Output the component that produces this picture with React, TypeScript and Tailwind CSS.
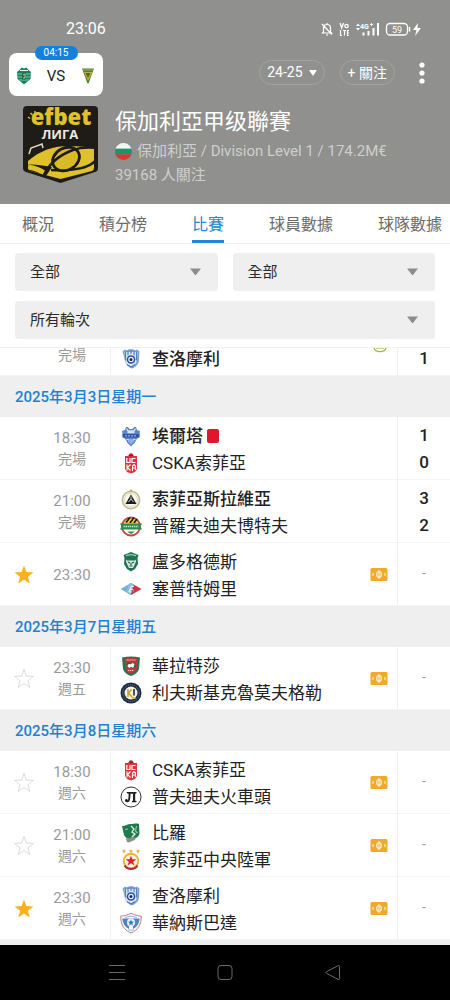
import { useState, type ReactNode } from "react";

type Team = { name: string; crest: ReactNode; score?: number; winner?: boolean; redCard?: boolean };
type Match = { id: string; time: string; note?: string; home: Team; away: Team; starred?: boolean };
type MatchDay = { date: string; matches: Match[] };

function Crest({ children }: { children: ReactNode }) {
  return (
    <svg viewBox="0 0 22 22" className="size-[22px] shrink-0" aria-hidden="true">
      {children}
    </svg>
  );
}

const chernoMore = (
  <Crest>
    <path d="M2.500 3.500 5 1.500l2 1 2-1.200h4l2 1.200 2-1 2.500 2-.6 9.500c-.4 3.500-3.500 6-6.900 7.500-3.400-1.500-6.500-4-6.900-7.500z" fill="#7fa3d6" />
    <path d="M4.500 4h13l-.8 9c-.5 2.800-3 4.800-5.700 6-2.700-1.200-5.200-3.200-5.700-6z" fill="#dfe9f7" />
    <path d="M5.500 3.500v9M8 2.500v5M11 2v4M14 2.500v5M16.500 3.500v9" stroke="#5580c2" strokeWidth="1.200" />
    <circle cx="11" cy="11.500" r="4.300" fill="#244f9c" />
    <circle cx="11" cy="11.500" r="2.700" fill="#fff" />
    <path d="m11 9.800 1.700 1.200-.6 2h-2.200l-.6-2z" fill="#16305f" />
    <path d="M7 16.500 11 19l4-2.500" stroke="#4a78bd" strokeWidth="1.200" fill="none" />
  </Crest>
);

const arda = (
  <Crest>
    <path d="M6 2h2l1.500 2h3L14 2h2l1 3 3 1-1 6-3 3-1 2.500-4 4-4-4L6 15l-3-3-1-6 3-1z" fill="#5b86cf" />
    <path d="M6.500 3.500 8 6h6l1.500-2.500M7.500 7.500h7" stroke="#d5e2f5" strokeWidth="1.300" fill="none" />
    <path d="M2.500 9h17v3.500h-17z" fill="#2c56a5" />
    <path d="M5 10.800h12" stroke="#a9c0e6" strokeWidth="1" strokeDasharray="2 1" />
    <path d="M6.500 14.500h2.500v3M15.500 14.500H13v3M11 14v5" stroke="#d5e2f5" strokeWidth=".9" fill="none" />
  </Crest>
);

const cska1948 = (
  <Crest>
    <path d="M5 4h4V2l2-1 2 1v2h4v13l-2 3-4 1.500L7 20l-2-3z" fill="#e2323b" />
    <path d="M8.500 3.500h5" stroke="#8d1b25" strokeWidth="1.200" />
    <path d="M6.800 6v4.500H10V6M15.500 6.500H12v4h3.500" stroke="#fff" strokeWidth="1.200" fill="none" />
    <path d="M7 12.500v6M10.500 12.500l-3 3 3 3M12.500 19v-5l1.500-1.500 1.500 1.500v4M12.500 16h3" stroke="#fff" strokeWidth="1.100" fill="none" />
  </Crest>
);

const slavia = (
  <Crest>
    <circle cx="11" cy="12" r="8.600" fill="#fbfaf5" stroke="#c7b98d" strokeWidth="1.600" />
    <circle cx="11" cy="12" r="6.500" fill="none" stroke="#e0d8bd" strokeWidth="1" />
    <path d="M9 3.500 11 1l2 2.500z" fill="#b7a979" />
    <path d="m11 6.500 5.500 9.500h-11z" fill="#1a1a1a" />
    <path d="m8.500 14 2.500-3 2.500 3M11 8.500V11" stroke="#fff" strokeWidth=".8" fill="none" />
  </Crest>
);

const botev = (
  <Crest>
    <circle cx="11" cy="11.500" r="9" fill="#fff" stroke="#c8453c" strokeWidth="2" />
    <path d="M4 8.500a8 8 0 0 1 14 0z" fill="#f3c81f" />
    <path d="m6 7.500 4-5M10 8l4-5.500M14 8l3-4" stroke="#1d1d1d" strokeWidth="1.700" />
    <path d="M0 8.500h22l-1.500 3L22 14.500H0l1.500-3z" fill="#2e8b4c" />
    <path d="M3.500 11.500h15" stroke="#cfe8d4" strokeWidth="1.600" strokeDasharray="1.400 .7" />
    <path d="M7 16.500h8l-4 2.500z" fill="#2e8b4c" />
  </Crest>
);

const ludogorets = (
  <Crest>
    <path d="m3.500 4 4-1.500L11 1l3.500 1.500 4 1.500-1 3 .5 6-3 5L11 20.500 7 18l-3-5 .5-6z" fill="#1f7550" />
    <path d="M6 4.800c3-1.200 7-1.200 10 0" stroke="#b7dccb" strokeWidth="1.100" fill="none" />
    <path d="M6 8.500c1 1.500 2 1 3.500 1h3c1.500 0 2.500.5 3.500-1 .5 2.500-1 3.500-1.500 5.500L13 17h-4l-1.500-3C7 12 5.500 11 6 8.500z" fill="#d7eae1" />
    <path d="m8 11 2 1M14 11l-2 1M9.500 15h3M11 12v2" stroke="#155a3b" strokeWidth="1.200" />
  </Crest>
);

const septemvri = (
  <Crest>
    <path d="M.5 11 11 5v12z" fill="#6fb3d8" />
    <path d="m11 5 10.500 6L11 17z" fill="#d23145" />
    <path d="m8.500 6.500 2.500-1.500 3 1.700-4 9.700-3.500-2z" fill="#8cc1de" />
    <path d="m9 14 2.300-5.500h3M10.300 11.300h3.200l-1 2.700H9.500" stroke="#fff" strokeWidth="1" fill="none" />
    <path d="m14.500 8-2.500 7" stroke="#a81f33" strokeWidth=".8" />
  </Crest>
);

const vratsa = (
  <Crest>
    <path d="M2 2.500c6-1.300 12-1.300 18 0l-1 11c-.5 3.500-4 6-8 7.500-4-1.500-7.500-4-8-7.500z" fill="#27764b" />
    <path d="M4.500 3.500c4-.8 9-.8 13 0l-.8 9.500c-.5 2.500-3 4.500-5.700 6-2.700-1.500-5.200-3.500-5.700-6z" fill="#d42f3b" />
    <path d="M6.500 7.500h9v5.500h-9z" fill="#236b43" />
    <path d="M7.500 11.500c0-2 1.500-3 3-2l2-1.500 2 1-1 3.500H12l-1-1-1.500 1.500z" fill="#fff" />
    <path d="M6.500 5h9M8 15.500h6" stroke="#f6c9cc" strokeWidth="1.200" strokeDasharray="1.300 .6" />
  </Crest>
);

const krumovgrad = (
  <Crest>
    <circle cx="11" cy="11" r="10.500" fill="#1b2c4a" />
    <circle cx="11" cy="11" r="8.300" fill="none" stroke="#8f9668" strokeWidth=".8" strokeDasharray="1.200 .9" />
    <circle cx="11" cy="11" r="6.500" fill="#f4f1dc" />
    <path d="M8 7v8M8.500 11l3-3.500M8.500 11l3.500 4" stroke="#c9a227" strokeWidth="1.500" />
    <path d="M14 7v6.500" stroke="#1b2c4a" strokeWidth="1.600" />
    <path d="m12 15.500 3.500 1" stroke="#d5b234" strokeWidth="1.400" />
  </Crest>
);

const lokoPlovdiv = (
  <Crest>
    <circle cx="11" cy="11" r="10" fill="#fff" stroke="#333" strokeWidth="1" />
    <path d="M6.500 6h10v1.300l-1.300.4v7l1.300.4v1.200h-4.500v-1.200l1-.4v-7h-2.500c-.1 5-.4 8.600-3.500 8.600-1.300 0-2-.8-2-1.700s.6-1.500 1.400-1.500c.7 0 1.200.5 1.300 1.200.7-.8.900-3.300.9-6.600l-1.600-.4z" fill="#222" />
  </Crest>
);

const beroe = (
  <Crest>
    <path d="M2 4c3 .5 5-2 9-2 3 0 5-1 8 0l.5 10c-1 3-4 4.500-7 6-4-.5-7-2-8.500-5z" fill="#1f7a4d" />
    <path d="M11 4l3 3-2 3 3 2-3 3" stroke="#e5f3ea" strokeWidth="1.300" fill="none" />
    <path d="m16.500 4-1 5 2 2M5 7.500l3-.5" stroke="#9cc9ae" strokeWidth="1.100" fill="none" />
    <path d="M6 17c2-2 3 0 5-1.500s3 .5 5-.5l-1 3-3 1-3 1.500-2-.5z" fill="#8e8d86" />
  </Crest>
);

const cska = (
  <Crest>
    <path d="m4 0 .6 1.300L6 1.500 5 2.500l.2 1.400L4 3.200l-1.200.7L3 2.500 2 1.500l1.400-.2zM11 0l.6 1.300 1.400.2-1 1 .2 1.400-1.200-.7-1.200.7.2-1.400-1-1 1.400-.2zM18 0l.6 1.300 1.400.2-1 1 .2 1.400-1.200-.7-1.200.7.200-1.400-1-1 1.400-.2z" fill="#f0a93a" />
    <circle cx="11" cy="12" r="7.300" fill="#fff6dc" stroke="#edb13f" strokeWidth="1.900" />
    <path d="m11 6.500 1.400 3.700h4l-3.200 2.500 1.200 3.900-3.400-2.300-3.400 2.300 1.200-3.900-3.200-2.500h4z" fill="#cf2432" />
    <path d="M4.500 16.500C6 19 8 20 11 20s5-1 6.500-3.500" stroke="#b92934" strokeWidth="2" fill="none" />
  </Crest>
);

const spartakVarna = (
  <Crest>
    <path d="M.8 4C4 4.200 7.500 3 11 1.300 14.500 3 18 4.200 21.200 4c.3 8-3 14-10.200 17C3.800 18 .5 12 .8 4z" fill="#fff" stroke="#c57589" strokeWidth="1" />
    <path d="M2.300 6.500h17.400c-.4 5-2.700 8.500-6.700 10.500v-3h-4v3C5 15 2.700 11.500 2.300 6.500z" fill="#4b87c4" />
    <circle cx="11" cy="10.500" r="4" fill="#eaf3fb" />
    <path d="m11 7.500.9 2 2.100.2-1.600 1.500.5 2.200-1.900-1.200-1.900 1.200.5-2.200L8 9.700l2.100-.2z" fill="#3e78b5" />
    <path d="M5 5.500 11 4l6 1.500M8 18h6" stroke="#8eb6de" strokeWidth="1.100" fill="none" />
  </Crest>
);

const previousMatch: Match = {
  id: "prev",
  time: "23:30",
  note: "完場",
  home: { name: "", crest: null },
  away: { name: "查洛摩利", crest: chernoMore, score: 1, winner: true },
};

const days: MatchDay[] = [
  {
    date: "2025年3月3日星期一",
    matches: [
      {
        id: "m1",
        time: "18:30",
        note: "完場",
        home: { name: "埃爾塔", crest: arda, score: 1, winner: true, redCard: true },
        away: { name: "CSKA索菲亞", crest: cska1948, score: 0 },
      },
      {
        id: "m2",
        time: "21:00",
        note: "完場",
        home: { name: "索菲亞斯拉維亞", crest: slavia, score: 3, winner: true },
        away: { name: "普羅夫迪夫博特夫", crest: botev, score: 2 },
      },
      {
        id: "m3",
        time: "23:30",
        starred: true,
        home: { name: "盧多格德斯", crest: ludogorets },
        away: { name: "塞普特姆里", crest: septemvri },
      },
    ],
  },
  {
    date: "2025年3月7日星期五",
    matches: [
      {
        id: "m4",
        time: "23:30",
        note: "週五",
        home: { name: "華拉特莎", crest: vratsa },
        away: { name: "利夫斯基克魯莫夫格勒", crest: krumovgrad },
      },
    ],
  },
  {
    date: "2025年3月8日星期六",
    matches: [
      {
        id: "m5",
        time: "18:30",
        note: "週六",
        home: { name: "CSKA索菲亞", crest: cska1948 },
        away: { name: "普夫迪夫火車頭", crest: lokoPlovdiv },
      },
      {
        id: "m6",
        time: "21:00",
        note: "週六",
        home: { name: "比羅", crest: beroe },
        away: { name: "索菲亞中央陸軍", crest: cska },
      },
      {
        id: "m7",
        time: "23:30",
        note: "週六",
        starred: true,
        home: { name: "查洛摩利", crest: chernoMore },
        away: { name: "華納斯巴達", crest: spartakVarna },
      },
    ],
  },
];

function StatusBar() {
  return (
    <div className="flex h-[53px] items-center justify-between pt-[5px] pr-[28px] pl-[66px]">
      <span className="text-[16px] leading-5">23:06</span>
      <svg viewBox="0 0 102 16" className="h-4 w-[102px]" fill="none" stroke="#fff" aria-hidden="true">
        <path d="M3.500 11V7a3.500 3.500 0 0 1 7 0v4l1 1h-9zM6 14h2M7 3.500V2M2 3l10 10.500" strokeWidth="1.200" />
        <path d="m20 2 1.700 5L23.500 2" strokeWidth="1.300" />
        <circle cx="26.500" cy="5" r="1.700" strokeWidth="1.300" />
        <path d="M20.500 9v5.500H22M23 9.500h3M24.500 9.500v5M29 9.500h-1.500v5H29M27.500 12H29" strokeWidth="1.200" />
        <path d="m36 5 2-2.500L40 5zM36 7h4l-2 2.500z" fill="#fff" stroke="none" />
        <text x="40" y="8" fontSize="7" fontWeight="700" fill="#fff" stroke="none">4G</text>
        <path d="M50 3.500h3M51.500 2v3" strokeWidth=".9" />
        <path d="M43.500 14.500v-3M48.500 14.500V10M53.500 14.500V7M58 14.500V2" strokeWidth="2" />
        <rect x="66.500" y="2.500" width="21" height="11.500" rx="3.500" strokeWidth="1.300" />
        <path d="M89.500 6v4.500" strokeWidth="1.500" />
        <text x="72" y="11.500" fontSize="9" fill="#fff" stroke="none">59</text>
        <path d="m98 2-5 7h3.500L95 15l6-8h-3.500z" fill="#fff" stroke="none" />
      </svg>
    </div>
  );
}

function LiveCard() {
  return (
    <a
      href="#live"
      className="relative ml-[9px] flex h-[43px] w-[94px] items-center justify-between rounded-lg bg-white px-2 pt-0.5 text-[#222]"
    >
      <span className="absolute inset-x-0 -top-[7px] mx-auto w-[43px] rounded-full bg-[#1580dc] text-center text-[10px] leading-[14px] text-white">
        04:15
      </span>
      <svg viewBox="0 0 14 18" className="h-[18px] w-3.5" aria-hidden="true">
        <path d="M3 2.500 4.500.5 7 1.500 9.500.5 11 2.500 14 5l-.5 7L10 15l-3 2.500L4 15 .5 12 0 5z" fill="#168463" />
        <path d="M0 7h14M.5 10h13M2 13h10" stroke="#8ecbb5" strokeWidth=".9" />
        <path d="M3 3.500h8" stroke="#fff" strokeWidth="1" />
        <path d="M5 6.500 7 5l2 1.500V12l-2 1-2-1z" fill="#176d50" />
        <path d="m6 8 2-1v4H6" stroke="#d8d278" strokeWidth=".9" fill="none" />
      </svg>
      <span className="text-[15px] leading-5">VS</span>
      <svg viewBox="0 0 14 18" className="h-[18px] w-3.5" aria-hidden="true">
        <path d="M1 1.500h12L7.500 16.500h-1z" fill="#547a32" />
        <path d="M3 5h8.500L7 14z" fill="#b2b83a" />
        <path d="M4.500 6h5L7 11z" fill="#6d5c2d" />
        <path d="M2 3h10" stroke="#93ad67" strokeWidth="1.200" />
      </svg>
    </a>
  );
}

function LeagueLogo() {
  return (
    <svg viewBox="0 0 75 78" className="h-[78px] w-[75px] shrink-0" role="img" aria-label="efbet Лига">
      <defs>
        <clipPath id="logo-field">
          <path d="M5 36h66v27q0 2-2 3L37.500 74 7 66q-2-1-2-3z" />
        </clipPath>
      </defs>
      <path d="M4 1h67q4 0 4 4v58q0 3-3 4L37.500 78 3 67q-3-1-3-4V5q0-4 4-4z" fill="#1f1c18" />
      <g clipPath="url(#logo-field)">
        <path d="M3 58C15 46 30 41 46 41c12 .5 20 1 29 3v34H3z" fill="#dfc22b" />
        <path d="M3 60c6-1 14 0 26 2l-8 12H3z" fill="#1f1c18" />
        <path d="M5 62c6 1 12 3 16 6" stroke="#dfc22b" strokeWidth="5" fill="none" />
        <path d="M72 56c-6 7-20 10-44 9" stroke="#1f1c18" strokeWidth="2.500" fill="none" />
        <ellipse cx="43" cy="54" rx="14" ry="11" transform="rotate(-28 43 54)" fill="#d8bb27" stroke="#1f1c18" strokeWidth="2.800" />
        <path d="M20 73c4-13 16-23 30-28 8-3 15-3 24-2" stroke="#1f1c18" strokeWidth="2.600" fill="none" />
      </g>
      <path d="m6 49 2-6 11-4 1 4" stroke="#ddd6c4" strokeWidth="1.500" fill="none" />
      <path d="m5 12 2 1.500M7.500 8l2 2M12 6v2.500" stroke="#dfc22b" strokeWidth="1.500" />
      <text x="38" y="20" textAnchor="middle" fontSize="22" fontWeight="800" fill="#dfc22b" fontFamily="Open Sans">
        efbet
      </text>
      <text x="37" y="34" textAnchor="middle" fontSize="13" fontWeight="700" fill="#eee9dc" fontFamily="Open Sans">
        ЛИГА
      </text>
    </svg>
  );
}

function Header() {
  return (
    <header className="bg-[#90908e] pb-[17px] text-white">
      <StatusBar />
      <div className="flex items-start">
        <LiveCard />
        <div className="ml-auto flex items-center pt-[7px] pr-[18px]">
          <button type="button" className="flex h-[25px] items-center gap-1.5 rounded-full border border-[#a2a2a0] px-[7px] text-[14px]">
            24-25
            <svg viewBox="0 0 8 6" className="h-1.5 w-2" aria-hidden="true">
              <path d="M0 0h8L4 6z" fill="#fff" />
            </svg>
          </button>
          <button type="button" className="ml-[15px] h-[25px] rounded-full border border-[#a2a2a0] px-[7px] text-[14px] leading-5 whitespace-nowrap">
            + 關注
          </button>
          <button type="button" aria-label="更多" className="ml-[17px] flex w-5 justify-center">
            <svg viewBox="0 0 6 22" className="h-[22px] w-1.5" fill="#fff" aria-hidden="true">
              <circle cx="3" cy="3" r="2.600" />
              <circle cx="3" cy="11" r="2.600" />
              <circle cx="3" cy="19" r="2.600" />
            </svg>
          </button>
        </div>
      </div>
      <div className="flex gap-[17px] pt-[9px] pr-4 pl-[23px]">
        <LeagueLogo />
        <div className="min-w-0">
          <h1 className="text-[22px] leading-[34px]">保加利亞甲级聯賽</h1>
          <p className="flex items-center gap-[5px] text-[15px] leading-6 whitespace-nowrap text-[#cfcfcd]">
            <svg viewBox="0 0 18 18" className="size-[17px]" aria-hidden="true">
              <clipPath id="flag">
                <circle cx="9" cy="9" r="9" />
              </clipPath>
              <g clipPath="url(#flag)">
                <path d="M0 0h18v6H0z" fill="#f5f5f5" />
                <path d="M0 6h18v6H0z" fill="#17966c" />
                <path d="M0 12h18v6H0z" fill="#d43a30" />
              </g>
            </svg>
            保加利亞 / Division Level 1 / 174.2M€
          </p>
          <p className="text-[15px] leading-6 text-[#cfcfcd]">39168 人關注</p>
        </div>
      </div>
    </header>
  );
}

const tabs = ["概況", "積分榜", "比賽", "球員數據", "球隊數據"];

function Tabs() {
  const [active, setActive] = useState("比賽");

  return (
    <nav className="flex gap-[45px] overflow-hidden border-b border-[#f0f0f0] pl-[22px]">
      {tabs.map((tab) => (
        <button
          key={tab}
          type="button"
          onClick={() => setActive(tab)}
          className={`h-[39px] shrink-0 border-b-[3px] pt-1.5 text-[16px] leading-[30px] ${
            tab === active ? "border-[#2585d0] text-[#2585d0]" : "border-transparent text-[#6b6b6b]"
          }`}
        >
          {tab}
        </button>
      ))}
    </nav>
  );
}

function FilterSelect({ label, value }: { label: string; value: string }) {
  return (
    <label className="relative block flex-1">
      <span className="sr-only">{label}</span>
      <select className="h-[38px] w-full appearance-none rounded bg-[#efefef] px-[15px] text-[15px] leading-[38px] text-[#2b2b2b]">
        <option>{value}</option>
      </select>
      <svg viewBox="0 0 11 8" className="pointer-events-none absolute top-[15px] right-[17px] h-2 w-[11px]" aria-hidden="true">
        <path d="M0 .500h11L5.500 7.500z" fill="#8c8c8c" />
      </svg>
    </label>
  );
}

function StarIcon({ filled }: { filled: boolean }) {
  return (
    <svg viewBox="0 0 22 22" className="size-[22px]" aria-hidden="true">
      <path
        d="m11 1.500 2.400 6.600 7 .3-5.500 4.300 1.900 6.800L11 15.600l-5.800 3.900 1.900-6.800-5.500-4.300 7-.3z"
        fill={filled ? "#fbb01f" : "none"}
        stroke={filled ? "none" : "#dcdcdc"}
      />
    </svg>
  );
}

function CashIcon() {
  return (
    <svg viewBox="0 0 18 13" className="h-[13px] w-[18px]" aria-hidden="true">
      <rect x=".5" width="17" height="13" rx="1.500" fill="#f0a92b" />
      <ellipse cx="9" cy="6.500" rx="2.300" ry="2.800" fill="none" stroke="#fff0cf" strokeWidth="1.300" />
      <path d="M9 2v9" stroke="#fff0cf" strokeWidth="1.200" />
      <path d="M3 5v3M15 5v3" stroke="#fff0cf" strokeWidth="1.200" />
    </svg>
  );
}

function TeamLine({ team }: { team: Team }) {
  return (
    <div className="flex h-[27px] items-center gap-2.5">
      {team.crest}
      <span className={`text-[17px] leading-6 whitespace-nowrap text-[#222] ${team.winner ? "font-medium" : ""}`}>{team.name}</span>
      {team.redCard ? <span className="-ml-1.5 h-3.5 w-3 rounded-xs bg-[#e0162b]" role="img" aria-label="紅牌" /> : null}
    </div>
  );
}

function MatchRow({ match }: { match: Match }) {
  const [starred, setStarred] = useState(Boolean(match.starred));
  const finished = match.away.score !== undefined;

  return (
    <div className="flex h-[63px] shrink-0 border-b border-[#f4f4f4]">
      <div className="flex w-[110px] items-center pt-0.5">
        <div className="flex w-12 justify-center">
          {finished ? null : (
            <button type="button" aria-label="收藏" aria-pressed={starred} onClick={() => setStarred(!starred)}>
              <StarIcon filled={starred} />
            </button>
          )}
        </div>
        <div className="w-12 text-center leading-[21px] text-[#9a9a9a]">
          <div className="text-[15px]">{match.time}</div>
          {match.note ? <div className="text-[14px]">{match.note}</div> : null}
        </div>
      </div>
      <div className="min-w-0 flex-1 border-l border-[#f0f0f0] pt-[5px] pl-[9px]">
        <TeamLine team={match.home} />
        <TeamLine team={match.away} />
      </div>
      <div className="flex w-9 items-center justify-center">{finished ? null : <CashIcon />}</div>
      <div className="flex w-[53px] flex-col items-center border-l border-[#f0f0f0] pt-[5px] pb-1.5 text-[17px] leading-[27px] font-medium text-[#222]">
        {finished ? (
          <>
            <span>{match.home.score ?? "\u00a0"}</span>
            <span>{match.away.score}</span>
          </>
        ) : (
          <span className="my-auto text-[14px] font-normal text-[#9a9a9a]">-</span>
        )}
      </div>
    </div>
  );
}

function LiveDot() {
  return (
    <svg viewBox="0 0 16 5" className="absolute top-0 right-[62px] h-[5px] w-4" fill="none" stroke="#9dbb3a" aria-hidden="true">
      <path d="M2 0c1.500 4.800 10.500 4.800 12 0" strokeWidth="1.300" />
      <path d="M4 .5h8" stroke="#c5d98a" />
    </svg>
  );
}

function NavBar() {
  return (
    <nav className="flex h-[55px] items-center bg-black px-[63px] text-[#6a6a6a]">
      <button type="button" aria-label="最近" className="flex flex-1 justify-center">
        <svg viewBox="0 0 16 16" className="size-4" fill="none" stroke="currentColor" aria-hidden="true">
          <path d="M0 .5h16M0 7.500h16M0 14.500h16" />
        </svg>
      </button>
      <button type="button" aria-label="主頁" className="flex flex-1 justify-center">
        <svg viewBox="0 0 16 16" className="size-4" fill="none" stroke="currentColor" aria-hidden="true">
          <rect x="1" y=".5" width="14" height="14" rx="3" />
        </svg>
      </button>
      <button type="button" aria-label="返回" className="flex flex-1 justify-center">
        <svg viewBox="0 0 16 16" className="size-4" fill="none" stroke="currentColor" strokeLinejoin="round" aria-hidden="true">
          <path d="M1.500 6.700 13 .7q1.500-.6 1.500.8v12q0 1.400-1.500.8L1.500 8.300q-1.200-.8 0-1.600z" />
        </svg>
      </button>
    </nav>
  );
}

export default function App() {
  return (
    <div className="flex min-h-screen flex-col bg-white font-['Roboto','Noto_Sans_CJK_TC',sans-serif]">
      <Header />
      <Tabs />
      <div className="flex flex-col gap-2.5 border-b border-[#f0f0f0] px-[15px] pt-[9px] pb-2">
        <div className="flex gap-[15px]">
          <FilterSelect label="主客" value="全部" />
          <FilterSelect label="球隊" value="全部" />
        </div>
        <FilterSelect label="輪次" value="所有輪次" />
      </div>
      <main className="flex-1 bg-[#efefef]">
        <div className="relative flex h-7 flex-col justify-end overflow-hidden bg-white">
          <MatchRow match={previousMatch} />
          <LiveDot />
        </div>
        {days.map((day) => (
          <section key={day.date}>
            <h2 className="px-[15px] pt-0.5 text-[15px] leading-[39px] font-medium text-[#2181cf]">{day.date}</h2>
            <div className="bg-white">
              {day.matches.map((match) => (
                <MatchRow key={match.id} match={match} />
              ))}
            </div>
          </section>
        ))}
      </main>
      <NavBar />
    </div>
  );
}
